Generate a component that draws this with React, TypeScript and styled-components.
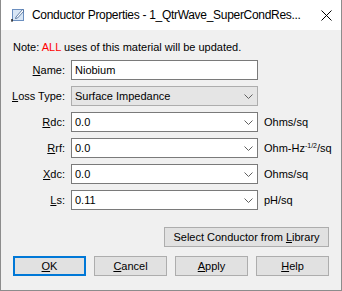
import React from 'react';
import styled, { createGlobalStyle } from 'styled-components';

const GlobalStyle = createGlobalStyle`
    html, body {
        margin: 0;
        padding: 0;
        background: #ffffff;
    }
    * {
        box-sizing: border-box;
    }
`;

const Window = styled.div`
    width: 342px;
    height: 291px;
    border: 1px solid #8c8c8c;
    border-top: none;
    display: flex;
    flex-direction: column;
    background: #f0f0f0;
    font-family: "Liberation Sans", Arial, sans-serif;
    font-size: 11px;
    color: #000;
`;

const TitleBar = styled.div`
    height: 30px;
    background: #ffffff;
    display: flex;
    align-items: center;
    padding-left: 9px;
    gap: 6px;
    flex-shrink: 0;
`;

const TitleText = styled.span`
    flex: 1;
    font-family: "Liberation Sans", Arial, sans-serif;
    font-size: 12px;
    letter-spacing: -0.3px;
    color: #000;
    white-space: nowrap;
`;

const CloseButton = styled.div`
    width: 30px;
    height: 30px;
    display: flex;
    align-items: center;
    justify-content: center;
`;

const Body = styled.div`
    flex: 1;
    display: flex;
    flex-direction: column;
    padding: 11px 11px 0 11px;
`;

const Note = styled.div`
    height: 19px;
    line-height: 13px;
    padding-left: 1px;
`;

const Alert = styled.span`
    color: #ff0000;
`;

const Form = styled.div`
    display: grid;
    grid-template-columns: 53px 187px auto;
    column-gap: 6px;
    row-gap: 6px;
    grid-auto-rows: 20px;
    align-items: center;
`;

const Label = styled.label`
    text-align: right;
    white-space: nowrap;
`;

const Key = styled.span`
    text-decoration: underline;
    text-underline-offset: 1px;
`;

const Field = styled.div<{ $disabled?: boolean }>`
    height: 20px;
    border: 1px solid ${(p) => (p.$disabled ? '#adadad' : '#7a7a7a')};
    background: ${(p) => (p.$disabled ? '#e5e5e5' : '#ffffff')};
    display: flex;
    align-items: center;
    padding-left: 3px;
    padding-right: 4px;
`;

const FieldText = styled.span`
    flex: 1;
    white-space: nowrap;
`;

const Unit = styled.span`
    white-space: nowrap;
`;

const Sup = styled.sup`
    font-size: 7px;
    vertical-align: 4px;
    line-height: 0;
`;

const LibraryRow = styled.div`
    display: flex;
    justify-content: flex-end;
    margin-top: 17px;
    padding-right: 1px;
`;

const ButtonRow = styled.div`
    display: flex;
    gap: 8px;
    margin-top: 9px;
    padding-left: 1px;
`;

const Button = styled.div<{ $width: number; $default?: boolean }>`
    width: ${(p) => p.$width}px;
    height: 20px;
    background: #e1e1e1;
    border: ${(p) => (p.$default ? '2px solid #0078d7' : '1px solid #adadad')};
    display: flex;
    align-items: center;
    justify-content: center;
    white-space: nowrap;
`;

const Chevron = () => (
    <svg width="9" height="5" viewBox="0 0 9 5">
        <path d="M0.5 0.5 L4.5 4.5 L8.5 0.5" fill="none" stroke="#606060" strokeWidth="1" />
    </svg>
);

const TitleIcon = () => (
    <svg width="16" height="16" viewBox="0 0 16 16">
        <rect x="2.5" y="2.5" width="11" height="11" fill="#d8e6f5" stroke="#6b8fc0" />
        <path d="M6 10 L12.5 2.5 L14 4 L7.5 11 L5.5 11.5 Z" fill="#ffffff" stroke="#3c5f8f" strokeWidth="0.8" />
        <path d="M1 13 L3 13 M2 12 L2 15" stroke="#202020" strokeWidth="1" />
    </svg>
);

const CloseIcon = () => (
    <svg width="11" height="11" viewBox="0 0 11 11">
        <path d="M0.5 0.5 L10.5 10.5 M10.5 0.5 L0.5 10.5" stroke="#000" strokeWidth="1" />
    </svg>
);

const rows: Array<{ key: string; rest: string; value: string; unit: React.ReactNode }> = [
    { key: 'R', rest: 'dc:', value: '0.0', unit: 'Ohms/sq' },
    { key: 'R', rest: 'rf:', value: '0.0', unit: <>Ohm-Hz<Sup>-1/2</Sup>/sq</> },
    { key: 'X', rest: 'dc:', value: '0.0', unit: 'Ohms/sq' },
    { key: 'L', rest: 's:', value: '0.11', unit: 'pH/sq' },
];

const App: React.FC = () => {
    return (
        <>
            <GlobalStyle />
            <Window>
                <TitleBar>
                    <TitleIcon />
                    <TitleText>Conductor Properties - 1_QtrWave_SuperCondRes...</TitleText>
                    <CloseButton>
                        <CloseIcon />
                    </CloseButton>
                </TitleBar>
                <Body>
                    <Note>
                        Note: <Alert>ALL</Alert> uses of this material will be updated.
                    </Note>
                    <Form>
                        <Label><Key>N</Key>ame:</Label>
                        <Field><FieldText>Niobium</FieldText></Field>
                        <span />

                        <Label><Key>L</Key>oss Type:</Label>
                        <Field $disabled>
                            <FieldText>Surface Impedance</FieldText>
                            <Chevron />
                        </Field>
                        <span />

                        {rows.map((row, i) => (
                            <React.Fragment key={i}>
                                <Label><Key>{row.key}</Key>{row.rest}</Label>
                                <Field>
                                    <FieldText>{row.value}</FieldText>
                                    <Chevron />
                                </Field>
                                <Unit>{row.unit}</Unit>
                            </React.Fragment>
                        ))}
                    </Form>
                    <LibraryRow>
                        <Button $width={165}>
                            <span>Select Conductor from <Key>L</Key>ibrary</span>
                        </Button>
                    </LibraryRow>
                    <ButtonRow>
                        <Button $width={73} $default><span><Key>O</Key>K</span></Button>
                        <Button $width={73}><span><Key>C</Key>ancel</span></Button>
                        <Button $width={73}><span><Key>A</Key>pply</span></Button>
                        <Button $width={73}><span><Key>H</Key>elp</span></Button>
                    </ButtonRow>
                </Body>
            </Window>
        </>
    );
};

export default App;
